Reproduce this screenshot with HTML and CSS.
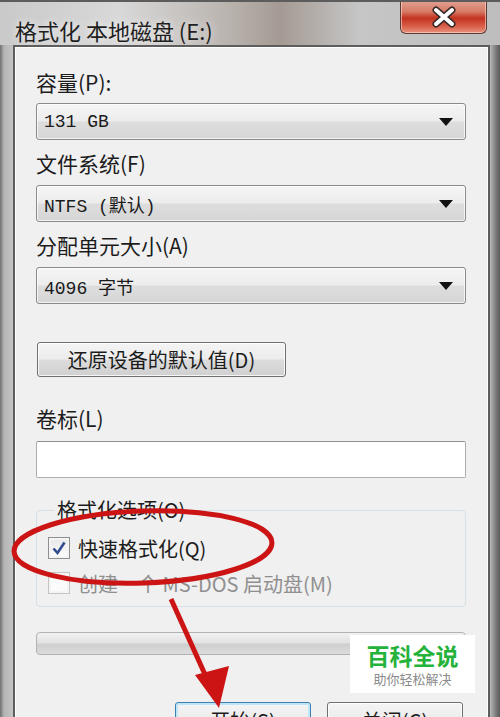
FILE: index.html
```html
<!DOCTYPE html>
<html lang="zh-CN">
<head>
  <meta charset="UTF-8">
  <title>格式化 本地磁盘 (E:)</title>
  <link rel="stylesheet" href="styles.css">
</head>
<body>
  <div class="window">
    <div class="titlebar">
      <div class="title">格式化 本地磁盘 (E:)</div>
      <div class="close-button">
        <svg width="26" height="22" viewBox="0 0 26 22">
          <path d="M5 4 L21 18 M21 4 L5 18" stroke="#3a2a2a" stroke-width="7" stroke-linecap="round"/>
          <path d="M5 4 L21 18 M21 4 L5 18" stroke="#ffffff" stroke-width="4" stroke-linecap="round"/>
        </svg>
      </div>
    </div>

    <div class="client">
      <div class="field-label first">容量(P):</div>
      <div class="combo">
        <span class="combo-value">131 GB</span>
        <span class="combo-arrow"></span>
      </div>

      <div class="field-label">文件系统(F)</div>
      <div class="combo">
        <span class="combo-value">NTFS (默认)</span>
        <span class="combo-arrow"></span>
      </div>

      <div class="field-label">分配单元大小(A)</div>
      <div class="combo">
        <span class="combo-value">4096 字节</span>
        <span class="combo-arrow"></span>
      </div>

      <div class="restore-row">
        <button class="btn restore-button">还原设备的默认值(D)</button>
      </div>

      <div class="field-label volume-label">卷标(L)</div>
      <div class="textbox"></div>

      <fieldset class="options">
        <legend>格式化选项(O)</legend>
        <div class="check-row">
          <span class="checkbox checked">
            <svg width="16" height="16" viewBox="0 0 16 16">
              <path d="M2.5 8.5 L6.5 13 L13.5 2.5" fill="none" stroke="#2f4c8f" stroke-width="2.6"/>
            </svg>
          </span>
          <span>快速格式化(Q)</span>
        </div>
        <div class="check-row disabled">
          <span class="checkbox"></span>
          <span>创建一个 MS-DOS 启动盘(M)</span>
        </div>
      </fieldset>

      <div class="progress"></div>

      <div class="actions">
        <button class="btn default-button">开始(S)</button>
        <button class="btn">关闭(C)</button>
      </div>
    </div>

    <svg class="annotation" width="500" height="717" viewBox="0 0 500 717">
      <ellipse cx="143" cy="545" rx="129" ry="36" fill="none" stroke="#cc1414" stroke-width="5" transform="rotate(-2 143 545)"/>
      <path d="M171 597 L212 688" stroke="#cc1414" stroke-width="5" fill="none"/>
      <path d="M219 706 L195 673 L229 664 Z" fill="#cc1414"/>
    </svg>

    <div class="watermark">
      <div class="watermark-title">百科全说</div>
      <div class="watermark-sub">助你轻松解决</div>
    </div>
  </div>
</body>
</html>
```

FILE: styles.css
```css
* {
  margin: 0;
  padding: 0;
  box-sizing: border-box;
  font-family: 'Noto Sans CJK SC', 'Liberation Sans', sans-serif;
}

body {
  width: 500px;
  height: 717px;
  overflow: hidden;
  background: #8d8d8d;
}

.window {
  position: relative;
  width: 500px;
  height: 717px;
  overflow: hidden;
  display: flex;
  flex-direction: column;
  padding: 0 10px 0 13px;
  background: linear-gradient(90deg, #6f6f6f 0, #b4b4b4 4px, #c2c2c2 12px, #b8b8b8 490px, #7a7a7a 496px, #5a5a5a 500px);
  border-top: 2px solid #5c5c5c;
}

.titlebar {
  height: 55px;
  display: flex;
  align-items: flex-start;
  justify-content: space-between;
  margin: 0 -10px 0 -13px;
  padding: 0 13px 0 15px;
  background: linear-gradient(90deg, #c9c9c9 0, #d8d8d8 120px, #b9b3ae 230px, #a49a93 280px, #c6c6c6 360px, #bdbdbd 500px);
}

.title {
  margin-top: 13px;
  font-size: 22px;
  line-height: 30px;
  color: #1f1f1f;
  text-shadow: 0 0 8px rgba(255, 255, 255, 0.9);
}

.close-button {
  width: 87px;
  height: 34px;
  margin-top: -2px;
  display: flex;
  align-items: center;
  justify-content: center;
  border: 1px solid #5a3a34;
  border-top: none;
  border-radius: 0 0 6px 6px;
  background: linear-gradient(180deg, #e2a595 0, #d77a66 35%, #c3321f 55%, #d9604a 80%, #e8947f 100%);
  box-shadow: inset 0 0 0 1px rgba(255, 220, 210, 0.6);
}

.client {
  flex: 1;
  display: flex;
  flex-direction: column;
  align-items: flex-start;
  padding: 22px 22px 0 21px;
  background: #f0f0f0;
  border: 2px solid #5d5d5d;
  border-bottom: none;
  box-shadow: inset 0 0 0 1px #ffffff;
}

.field-label {
  font-size: 21px;
  line-height: 26px;
  color: #1c1c1c;
  margin: 10px 0 9px;
}

.field-label.first {
  margin-top: 0;
  margin-bottom: 8px;
}

.combo {
  width: 100%;
  height: 37px;
  display: flex;
  align-items: center;
  justify-content: space-between;
  padding: 0 12px 0 7px;
  border: 1px solid #8a8a8a;
  border-radius: 3px;
  background: linear-gradient(180deg, #f5f5f5 0, #ececec 48%, #dddddd 52%, #d6d6d6 100%);
  box-shadow: inset 0 0 0 1px rgba(255, 255, 255, 0.7);
}

.combo-value {
  font-family: 'Liberation Mono', 'Noto Sans CJK SC', monospace;
  font-size: 18px;
  color: #1a1a1a;
}

.combo-arrow {
  width: 0;
  height: 0;
  border-left: 7px solid transparent;
  border-right: 7px solid transparent;
  border-top: 8px solid #111111;
}

.restore-row {
  margin-top: 38px;
}

.btn {
  height: 35px;
  padding: 0 16px;
  font-size: 20px;
  color: #1c1c1c;
  border: 1px solid #707070;
  border-radius: 3px;
  background: linear-gradient(180deg, #f4f4f4 0, #ececec 48%, #dcdcdc 52%, #d0d0d0 100%);
  box-shadow: inset 0 0 0 1px rgba(255, 255, 255, 0.8);
}

.restore-button {
  width: 249px;
  margin-left: 1px;
}

.volume-label {
  margin-top: 28px;
  margin-bottom: 10px;
}

.textbox {
  width: 100%;
  height: 37px;
  background: #ffffff;
  border: 1px solid #abadb3;
  border-top-color: #8e9096;
  border-radius: 2px;
}

.options {
  width: 100%;
  margin-top: 21px;
  padding: 11px 12px 7px 11px;
  border: 1px solid #d5dfe5;
  border-radius: 4px;
}

.options legend {
  margin-left: 6px;
  padding: 0 3px;
  font-size: 20px;
  line-height: 22px;
  color: #1c1c1c;
}

.check-row {
  display: flex;
  align-items: center;
  gap: 8px;
  height: 32px;
  font-size: 20px;
  color: #1c1c1c;
}

.check-row.disabled {
  color: #8f8f8f;
  margin-top: 3px;
}

.checkbox {
  width: 22px;
  height: 22px;
  display: flex;
  align-items: center;
  justify-content: center;
  border: 1px solid #8f8f8f;
  background: linear-gradient(180deg, #e6e6e6, #ffffff);
  box-shadow: inset 0 0 0 2px #f4f4f4;
}

.check-row.disabled .checkbox {
  border-color: #c4c4c4;
  background: #fbfbfb;
}

.progress {
  width: 100%;
  height: 23px;
  margin-top: 25px;
  border: 1px solid #b2b2b2;
  border-radius: 4px;
  background: linear-gradient(180deg, #f2f2f2 0, #e2e2e2 45%, #cfcfcf 55%, #dcdcdc 100%);
}

.actions {
  align-self: stretch;
  display: flex;
  justify-content: flex-end;
  gap: 16px;
  margin-top: 47px;
  padding-right: 3px;
}

.actions .btn {
  width: 136px;
  height: 36px;
}

.actions .default-button {
  border-color: #3c7fb1;
  box-shadow: inset 0 0 0 2px #bfe6f7;
}

.annotation {
  position: absolute;
  top: 0;
  left: 0;
  pointer-events: none;
}

.watermark {
  position: absolute;
  left: 350px;
  top: 633px;
  width: 125px;
  height: 58px;
  display: flex;
  flex-direction: column;
  align-items: center;
  justify-content: center;
  background: #ffffff;
}

.watermark-title {
  font-size: 23px;
  line-height: 30px;
  font-weight: 700;
  color: #25b23a;
}

.watermark-sub {
  font-size: 13px;
  line-height: 18px;
  color: #8a8a8a;
}
```
